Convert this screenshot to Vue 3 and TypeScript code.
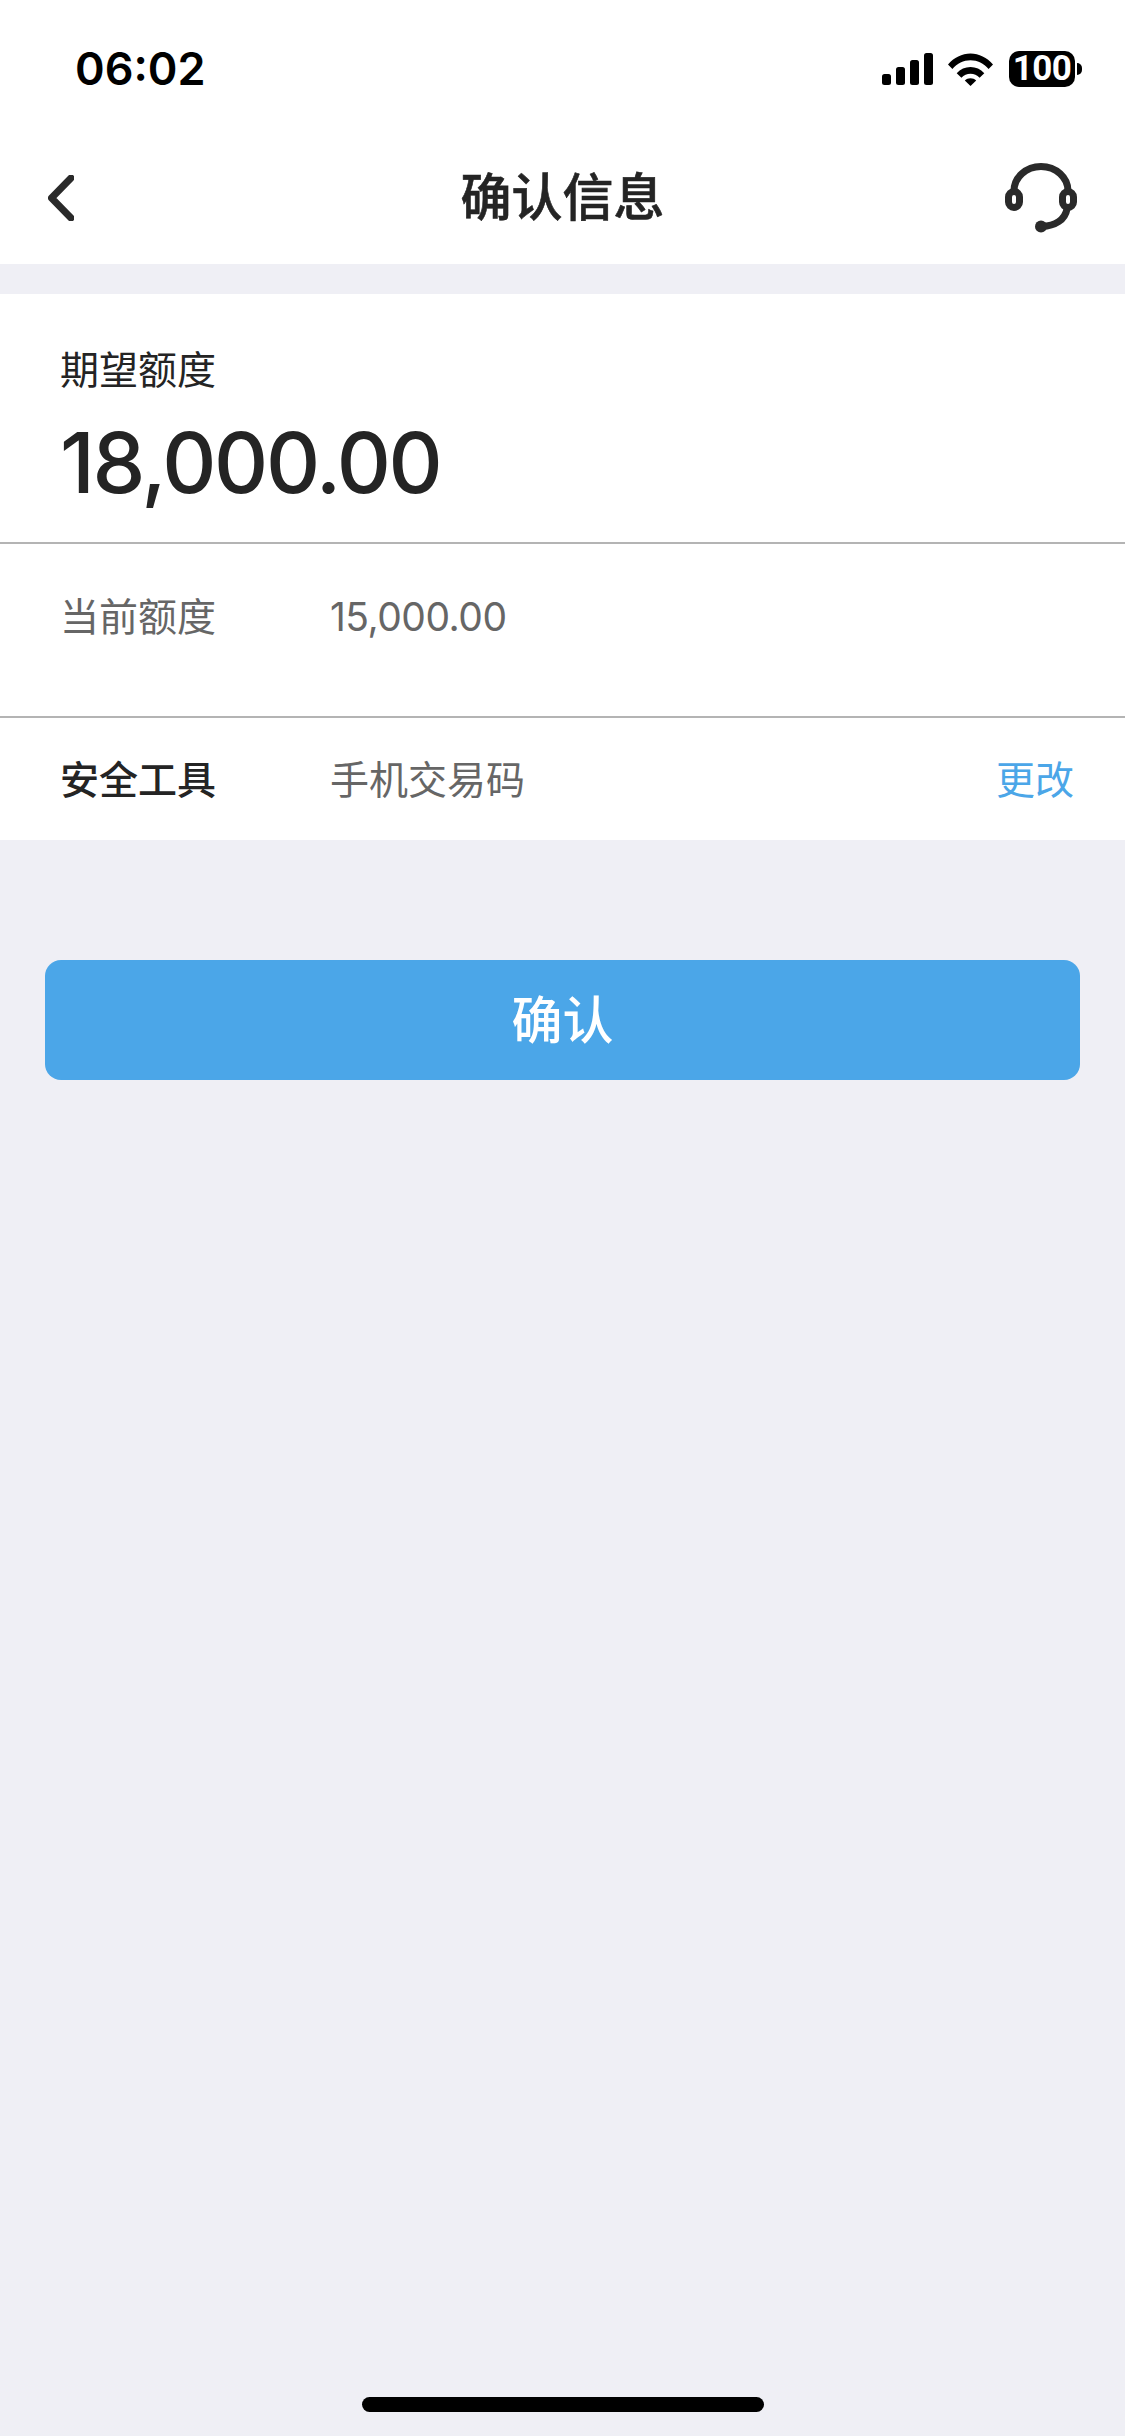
<script setup lang="ts">
const quota = { expected: "18,000.00", current: "15,000.00" };
</script>

<template>
  <div class="page">
    <header class="top">
      <div class="status">
        <span class="time">06:02</span>
        <div class="status-icons">
          <svg class="signal" width="51" height="32" viewBox="0 0 51 32">
            <rect x="0" y="21" width="9" height="11" rx="2.5" />
            <rect x="14" y="14" width="9" height="18" rx="2.5" />
            <rect x="28" y="7" width="9" height="25" rx="2.5" />
            <rect x="42" y="0" width="9" height="32" rx="2.5" />
          </svg>
          <svg class="wifi" width="45" height="33" viewBox="0 0 45 33">
            <path d="M0 11.5C6 4.5 14 0.5 22.5 0.5S39 4.5 45 11.5L40.6 16C35.8 10.4 29.4 7.2 22.5 7.2S9.200 10.400 4.400 16Z" />
            <path d="M8.700 20.200C12.400 16.200 17.200 14 22.500 14S32.600 16.200 36.300 20.200L31.600 24.800C29.100 22.200 26 20.800 22.500 20.800S15.900 22.200 13.400 24.800Z" />
            <path d="M16.800 27.500C18.400 26 20.300 25.200 22.500 25.200S26.600 26 28.200 27.500L22.500 33Z" />
          </svg>
          <div class="battery">
            <span class="battery-body">100</span>
            <span class="battery-nub"></span>
          </div>
        </div>
      </div>
      <nav class="nav">
        <svg class="back" width="26" height="46" viewBox="0 0 26 46">
          <path d="M23 3L3.500 23L23 43" />
        </svg>
        <h1 class="title">确认信息</h1>
        <svg class="support" width="72" height="70" viewBox="0 0 72 70">
          <path class="band" d="M9 28A27 24.500 0 0 1 63 28" />
          <rect class="cup" x="3.500" y="28.500" width="11" height="16" rx="5.500" />
          <rect class="cup" x="57.500" y="28.500" width="11" height="16" rx="5.500" />
          <path class="band" d="M62 46C60 57 50 63 37 63.500" />
          <circle cx="36" cy="63.500" r="6" />
        </svg>
      </nav>
    </header>

    <section class="panel">
      <div class="hero">
        <div class="hero-label">期望额度</div>
        <div class="hero-amount">{{ quota.expected }}</div>
      </div>
      <div class="row row-current">
        <span class="row-label">当前额度</span>
        <span class="row-value number">{{ quota.current }}</span>
      </div>
      <div class="row row-tool">
        <span class="row-label strong">安全工具</span>
        <span class="row-value">手机交易码</span>
        <a class="change">更改</a>
      </div>
    </section>

    <div class="actions">
      <button class="confirm" type="button">确认</button>
    </div>

    <div class="home-bar"></div>
  </div>
</template>

<style scoped>
.page {
  display: flex;
  flex-direction: column;
  width: 1125px;
  height: 2436px;
  overflow: hidden;
  background: #efeff5;
  color: #242424;
  font-family: Inter, "Noto Sans CJK SC", sans-serif;
}

.top {
  background: #fff;
}

.status {
  display: flex;
  align-items: center;
  justify-content: space-between;
  height: 132px;
  padding: 6px 43px 0 75px;
  box-sizing: border-box;
}

.time {
  color: #000;
  font-size: 45px;
  font-weight: 600;
  line-height: 56px;
}

.status-icons {
  display: flex;
  align-items: center;
}

.status-icons svg {
  fill: #000;
}

.wifi {
  margin-left: 15px;
}

.battery {
  display: flex;
  align-items: center;
  margin-left: 16px;
}

.battery-body {
  width: 66px;
  height: 36px;
  border-radius: 10px;
  background: #000;
  color: #fff;
  font-family: Roboto, Inter, sans-serif;
  font-size: 35px;
  font-weight: 700;
  line-height: 36px;
  text-align: center;
  letter-spacing: -0.5px;
}

.battery-nub {
  width: 5px;
  height: 12px;
  margin-left: 2px;
  border-radius: 0 6px 6px 0;
  background: #000;
}

.nav {
  display: grid;
  grid-template-columns: 1fr auto 1fr;
  align-items: center;
  height: 132px;
  padding: 0 48px;
  box-sizing: border-box;
}

.back {
  fill: none;
  stroke: #2a2a2a;
  stroke-width: 7;
  stroke-linecap: round;
  stroke-linejoin: round;
}

.title {
  margin: 0;
  font-size: 51px;
  font-weight: 500;
  line-height: 60px;
  -webkit-text-stroke: 0.6px #242424;
}

.support {
  justify-self: end;
  fill: #2a2a2a;
}

.band {
  fill: none;
  stroke: #2a2a2a;
  stroke-width: 7;
}

.cup {
  fill: #fff;
  stroke: #2a2a2a;
  stroke-width: 7;
}

.panel {
  margin-top: 30px;
  background: #fff;
}

.hero {
  height: 250px;
  padding: 50px 60px 0;
  box-sizing: border-box;
  border-bottom: 2px solid #b4b4b4;
}

.hero-label {
  font-size: 39px;
  line-height: 52px;
}

.hero-amount {
  margin-top: 17px;
  font-size: 84px;
  font-weight: 500;
  letter-spacing: -2.300px;
  line-height: 100px;
}

.row {
  display: flex;
  align-items: center;
  padding: 0 51px 0 60px;
  box-sizing: border-box;
}

.row-current {
  height: 174px;
  padding-bottom: 26px;
  border-bottom: 2px solid #b4b4b4;
}

.row-tool {
  height: 122px;
  padding-top: 2px;
}

.row-label {
  width: 270px;
  color: #666;
  font-size: 39px;
  line-height: 52px;
}

.row-label.strong {
  color: #242424;
  font-weight: 500;
}

.row-value {
  flex: 1;
  color: #666;
  font-size: 39px;
  line-height: 52px;
}

.row-value.number {
  letter-spacing: -0.500px;
}

.change {
  color: #4ba6e8;
  font-size: 39px;
  line-height: 52px;
}

.actions {
  padding: 120px 45px 0;
}

.confirm {
  display: block;
  width: 100%;
  height: 120px;
  padding: 0 0 6px;
  border: 0;
  border-radius: 16px;
  background: #4ba6e8;
  color: #fff;
  font-family: inherit;
  font-size: 51px;
  font-weight: 500;
}

.home-bar {
  width: 402px;
  height: 15px;
  margin: auto auto 24px;
  border-radius: 8px;
  background: #000;
}
</style>
